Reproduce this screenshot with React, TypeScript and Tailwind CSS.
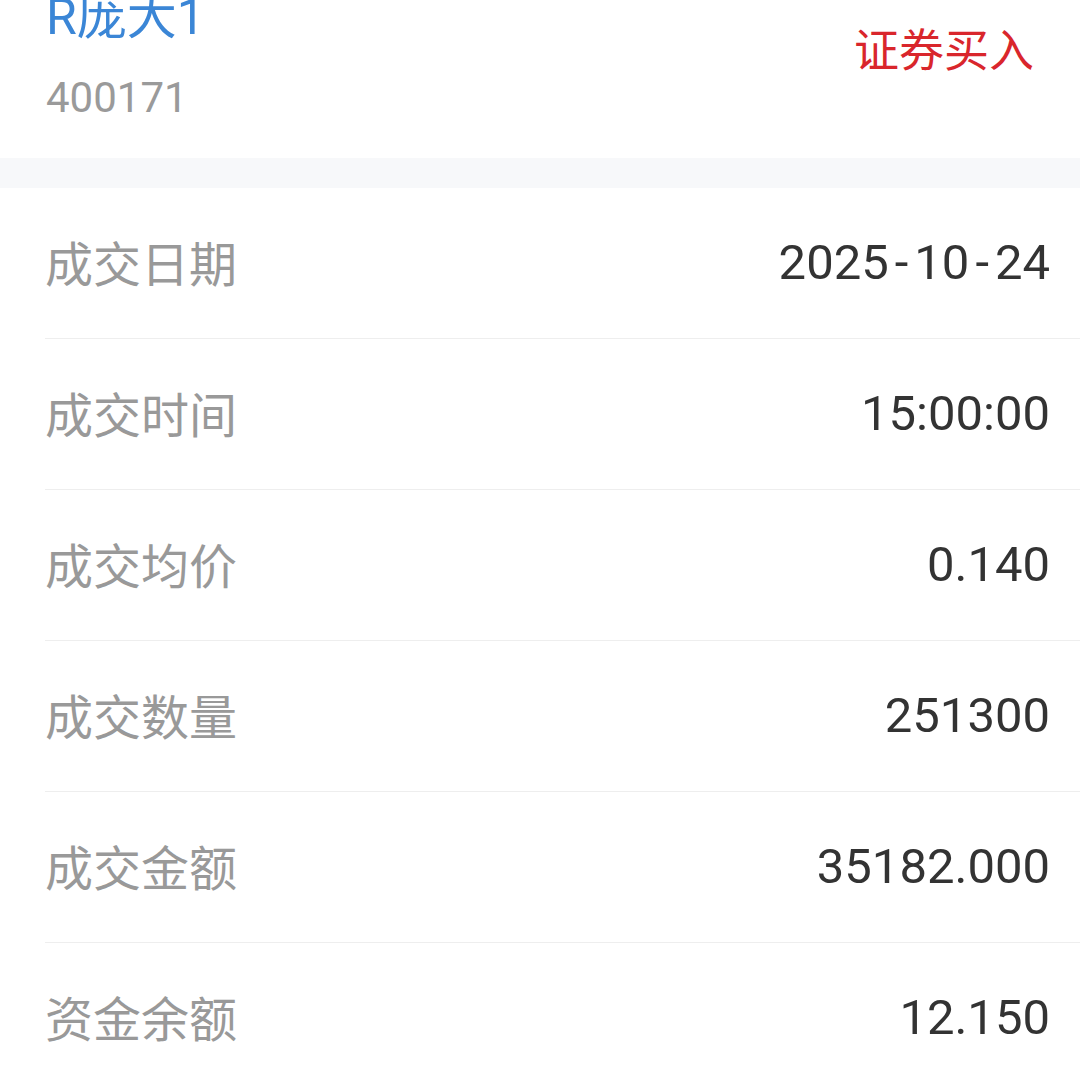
import React from 'react';

interface DetailRow {
  label: string;
  value: string;
}

const rows: DetailRow[] = [
  { label: '成交日期', value: '2025-10-24' },
  { label: '成交时间', value: '15:00:00' },
  { label: '成交均价', value: '0.140' },
  { label: '成交数量', value: '251300' },
  { label: '成交金额', value: '35182.000' },
  { label: '资金余额', value: '12.150' },
];

const renderValue = (value: string) =>
  value.split('-').map((part, i) => (
    <React.Fragment key={i}>
      {i > 0 && <span className="mx-[6px]">-</span>}
      {part}
    </React.Fragment>
  ));

const App: React.FC = () => {
  return (
    <div className="h-[1083px] overflow-hidden bg-white">
      {/* page is scrolled a little, so the name is cut at the top */}
      <div className="-mt-[13px]">
        <div className="flex items-start justify-between px-[46px] pb-[35px]">
          <div className="flex flex-col">
            <span className="text-[50px] leading-[60px] text-[#3b86d6] font-['Roboto','Noto_Sans_CJK_SC',sans-serif]">
              R庞大1
            </span>
            <span className="mt-[26px] text-[42px] leading-[50px] text-[#9a9a9a] font-['Roboto',sans-serif]">
              400171
            </span>
          </div>
          <span className="mt-[34px] text-[45px] leading-[53px] text-[#d9262c] font-['Noto_Sans_CJK_SC',sans-serif]">
            证券买入
          </span>
        </div>

        <div className="h-[30px] bg-[#f7f8fa]" />

        <div className="flex flex-col">
          {rows.map(row => (
            <div
              key={row.label}
              className="ml-[45px] pr-[30px] h-[151px] border-b border-[#eeeeee] flex items-center justify-between"
            >
              <span className="-mt-[4px] text-[48px] text-[#999999] font-['Noto_Sans_CJK_SC',sans-serif]">
                {row.label}
              </span>
              <span className="text-[49px] text-[#333333] font-['Roboto',sans-serif]">
                {renderValue(row.value)}
              </span>
            </div>
          ))}
        </div>
      </div>
    </div>
  );
};

export default App;
